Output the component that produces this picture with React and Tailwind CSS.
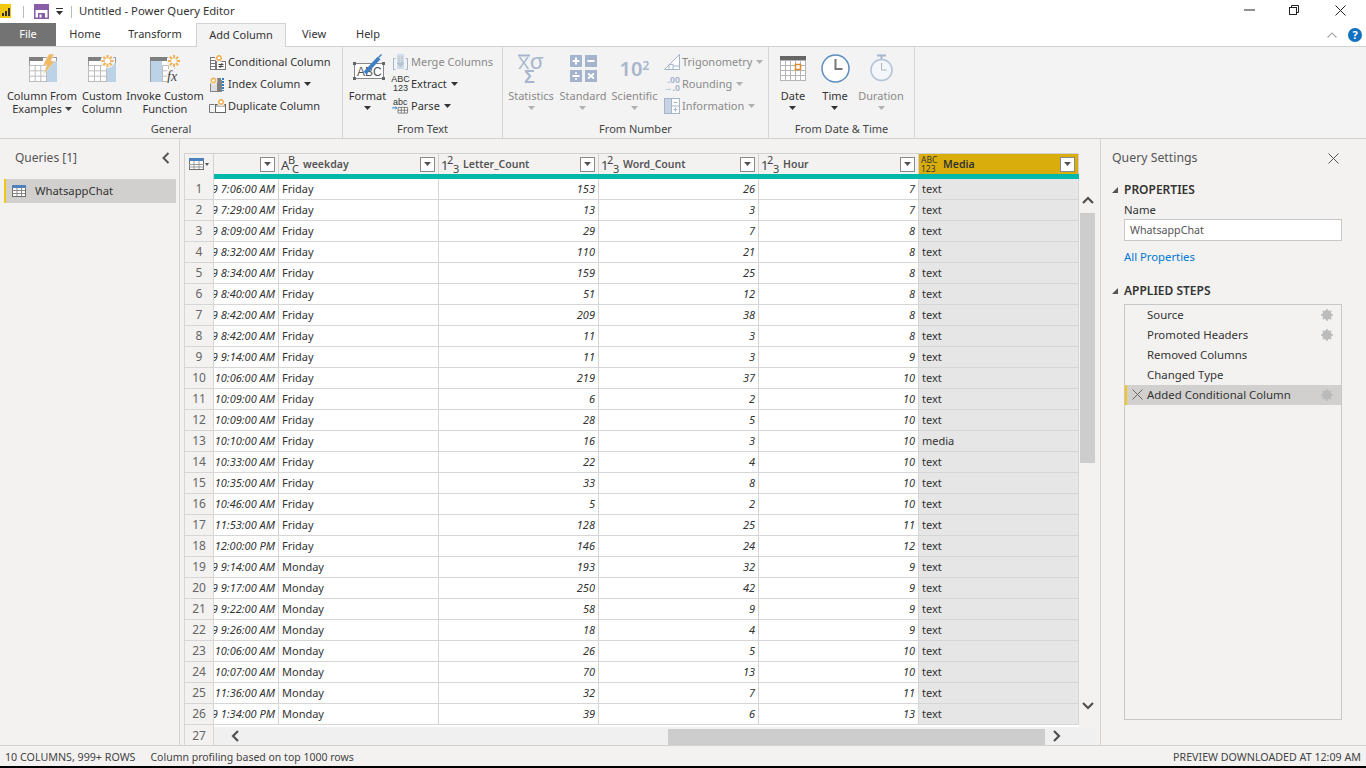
const FONT = { fontFamily: '"Noto Sans", "Open Sans", sans-serif' }

const rows = [
  ['7:06:00 AM', 'Friday', 153, 26, 7, 'text'],
  ['7:29:00 AM', 'Friday', 13, 3, 7, 'text'],
  ['8:09:00 AM', 'Friday', 29, 7, 8, 'text'],
  ['8:32:00 AM', 'Friday', 110, 21, 8, 'text'],
  ['8:34:00 AM', 'Friday', 159, 25, 8, 'text'],
  ['8:40:00 AM', 'Friday', 51, 12, 8, 'text'],
  ['8:42:00 AM', 'Friday', 209, 38, 8, 'text'],
  ['8:42:00 AM', 'Friday', 11, 3, 8, 'text'],
  ['9:14:00 AM', 'Friday', 11, 3, 9, 'text'],
  ['10:06:00 AM', 'Friday', 219, 37, 10, 'text'],
  ['10:09:00 AM', 'Friday', 6, 2, 10, 'text'],
  ['10:09:00 AM', 'Friday', 28, 5, 10, 'text'],
  ['10:10:00 AM', 'Friday', 16, 3, 10, 'media'],
  ['10:33:00 AM', 'Friday', 22, 4, 10, 'text'],
  ['10:35:00 AM', 'Friday', 33, 8, 10, 'text'],
  ['10:46:00 AM', 'Friday', 5, 2, 10, 'text'],
  ['11:53:00 AM', 'Friday', 128, 25, 11, 'text'],
  ['12:00:00 PM', 'Friday', 146, 24, 12, 'text'],
  ['9:14:00 AM', 'Monday', 193, 32, 9, 'text'],
  ['9:17:00 AM', 'Monday', 250, 42, 9, 'text'],
  ['9:22:00 AM', 'Monday', 58, 9, 9, 'text'],
  ['9:26:00 AM', 'Monday', 18, 4, 9, 'text'],
  ['10:06:00 AM', 'Monday', 26, 5, 10, 'text'],
  ['10:07:00 AM', 'Monday', 70, 13, 10, 'text'],
  ['11:36:00 AM', 'Monday', 32, 7, 11, 'text'],
  ['1:34:00 PM', 'Monday', 39, 6, 13, 'text'],
]

const steps = [
  { name: 'Source', gear: true },
  { name: 'Promoted Headers', gear: true },
  { name: 'Removed Columns' },
  { name: 'Changed Type' },
  { name: 'Added Conditional Column', gear: true, active: true },
]

function Caret({ color = '#444' }) {
  return <svg width="7" height="4" viewBox="0 0 7 4" className="inline-block"><path d="M0 0h7L3.500 4z" fill={color} /></svg>
}

function Grid({ x, y, w, h, cols, rows: r, stroke = '#8a8a8a' }) {
  const lines = []
  for (let i = 0; i <= cols; i++) lines.push(<path key={'c' + i} d={`M${x + (w * i) / cols} ${y}v${h}`} stroke={stroke} />)
  for (let i = 0; i <= r; i++) lines.push(<path key={'r' + i} d={`M${x} ${y + (h * i) / r}h${w}`} stroke={stroke} />)
  return <g strokeWidth="1" fill="none">{lines}</g>
}

function Spark({ cx, cy, r = 6 }) {
  return (
    <g stroke="#f0b45a" strokeWidth="2">
      <circle cx={cx} cy={cy} r={r + 1} fill="#f3f3f3" stroke="none" />
      <path d={`M${cx - r} ${cy}h${r * 2}M${cx} ${cy - r}v${r * 2}M${cx - r * 0.7} ${cy - r * 0.7}l${r * 1.4} ${r * 1.4}M${cx - r * 0.7} ${cy + r * 0.7}l${r * 1.4} ${-r * 1.4}`} />
      <circle cx={cx} cy={cy} r={r * 0.45} fill="#fff" stroke="none" />
    </g>
  )
}

function IconExamples() {
  return (
    <svg width="30" height="32" viewBox="0 0 30 32">
      <rect x="2.500" y="5.500" width="27" height="24" fill="#fff" stroke="#9a9a9a" />
      <rect x="2" y="5" width="14" height="4" fill="#7f7f7f" />
      <rect x="20" y="9" width="10" height="21" fill="#bcd2e6" />
      <Grid x={2.5} y={13.5} w={17} h={16} cols={3} rows={3} stroke="#bdbdbd" />
      <path d="M22 2h5l-3 7h4L16 23l4-10h-4z" fill="#f0b860" stroke="#f3f3f3" strokeWidth="0.500" />
    </svg>
  )
}

function IconCustom() {
  return (
    <svg width="30" height="28" viewBox="0 0 30 28">
      <rect x="1.500" y="3.500" width="27" height="24" fill="#fff" stroke="#9a9a9a" />
      <rect x="1" y="3" width="14" height="4" fill="#7f7f7f" />
      <rect x="20" y="9" width="9" height="19" fill="#bcd2e6" />
      <Grid x={1.5} y={11.5} w={18} h={16} cols={3} rows={3} stroke="#bdbdbd" />
      <Spark cx={20.5} cy={7} />
    </svg>
  )
}

function IconInvoke() {
  return (
    <svg width="32" height="30" viewBox="0 0 32 30">
      <rect x="1.500" y="4.500" width="24" height="24" fill="#fff" stroke="#9a9a9a" />
      <rect x="1" y="4" width="17" height="4" fill="#7f7f7f" />
      <rect x="2" y="8" width="11" height="21" fill="#bcd2e6" />
      <Grid x={13.5} y={12.5} w={12} h={16} cols={2} rows={3} stroke="#bdbdbd" />
      <Spark cx={25} cy={8} />
      <rect x="18" y="16" width="14" height="14" fill="#f3f3f3" />
      <text x="18" y="28" fontSize="14" fontStyle="italic" fontFamily='"Liberation Serif", serif' fill="#444">fx</text>
    </svg>
  )
}

function IconConditional() {
  return (
    <svg width="16" height="15" viewBox="0 0 16 15">
      <rect x="0.500" y="2.500" width="5" height="12" fill="#fff" stroke="#777" />
      <path d="M0 5.500h5M0 8.500h5M0 11.500h5" stroke="#777" />
      <rect x="6.500" y="6.500" width="9" height="8" fill="#fff" stroke="#777" />
      <path d="M8.500 9.500h5M8.500 11.500h5M12 8l-2 5" stroke="#444" />
      <Spark cx={9} cy={3} r={3} />
    </svg>
  )
}

function IconIndex() {
  return (
    <svg width="16" height="15" viewBox="0 0 16 15">
      <rect x="0.500" y="3.500" width="11" height="11" fill="#ddd" stroke="#888" />
      <rect x="7" y="1" width="4" height="14" fill="#7f7f7f" />
      <path d="M13 1v13" stroke="#2f7fc6" strokeDasharray="2 1" strokeWidth="2" />
      <Spark cx={3.500} cy={3.500} r={3} />
    </svg>
  )
}

function IconDuplicate() {
  return (
    <svg width="17" height="15" viewBox="0 0 17 15">
      <path d="M5.500 5.500h-5v8h5" fill="none" stroke="#777" />
      <rect x="6.500" y="5.500" width="10" height="8" fill="#fff" stroke="#666" />
      <rect x="7" y="6" width="9" height="2" fill="#bbb" />
      <Spark cx={12} cy={3} r={3} />
    </svg>
  )
}

function IconFormat() {
  return (
    <svg width="34" height="28" viewBox="0 0 34 28">
      <rect x="3.500" y="9.500" width="29" height="15" fill="#fff" stroke="#888" />
      <rect x="2" y="8" width="3" height="3" fill="#666" />
      <rect x="31" y="8" width="3" height="3" fill="#666" />
      <rect x="2" y="23" width="3" height="3" fill="#666" />
      <rect x="31" y="23" width="3" height="3" fill="#666" />
      <text x="6" y="22" fontSize="12" fontFamily='"Liberation Sans", sans-serif' fill="#555">ABC</text>
      <path d="M14 19 28 4" stroke="#3f7fc4" strokeWidth="4" />
      <path d="M27 3l3-3 1 1-3 3z" fill="#3f7fc4" />
    </svg>
  )
}

function IconMerge() {
  return (
    <svg width="17" height="18" viewBox="0 0 17 18">
      <path d="M3.500 5.500h-2v11h2M13.500 5.500h2v11h-2" fill="none" stroke="#9fb6d0" />
      <rect x="5" y="1" width="7" height="15" fill="#d4dce6" />
      <path d="M7 3v7M10 3v7M5 10l3.500 4L12 10z" fill="#b4c4d6" stroke="#b4c4d6" />
    </svg>
  )
}

function IconStack({ top, bottom }) {
  return (
    <div className="w-[17px] flex flex-col items-center leading-[9px] text-[9px] text-[#333]" style={{ fontFamily: '"Liberation Sans", sans-serif' }}>
      <span>{top}</span>
      <span>{bottom}</span>
    </div>
  )
}

function IconParse() {
  return (
    <svg width="18" height="18" viewBox="0 0 18 18">
      <text x="1" y="8" fontSize="9.500" fontFamily='"Liberation Sans", sans-serif' fill="#333">abc</text>
      <path d="M0 11h5l-1.500-1.500M5 11l-1.500 1.500" stroke="#2f7fc6" fill="none" />
      <rect x="7" y="10" width="10" height="7" fill="#fff" />
      <Grid x={6.5} y={10.5} w={10} h={6} cols={3} rows={2} stroke="#777" />
    </svg>
  )
}

function IconStatistics() {
  return (
    <svg width="28" height="30" viewBox="0 0 28 30">
      <path d="M1 2.500h12" stroke="#a7b6cc" strokeWidth="2" />
      <text x="1" y="16" fontSize="17" fontFamily='"Liberation Sans", sans-serif' fill="#a7b6cc">X</text>
      <text x="13" y="16" fontSize="22" fontFamily='"Liberation Sans", sans-serif' fill="#a7b6cc">&sigma;</text>
      <text x="7" y="30" fontSize="18" fontWeight="bold" fontFamily='"Liberation Sans", sans-serif' fill="#a7b6cc">&Sigma;</text>
    </svg>
  )
}

function IconStandard() {
  return (
    <svg width="27" height="27" viewBox="0 0 27 27">
      <rect width="12" height="12" fill="#a3b4cc" />
      <rect x="15" width="12" height="12" fill="#a3b4cc" />
      <rect y="15" width="12" height="12" fill="#a3b4cc" />
      <rect x="15" y="15" width="12" height="12" fill="#a3b4cc" />
      <path d="M2.500 6h7M6 2.500v7M17.500 6h7M2.500 21h7M18 18.500l6 5M24 18.500l-6 5" stroke="#fff" strokeWidth="2" />
      <circle cx="6" cy="18" r="1" fill="#fff" />
      <circle cx="6" cy="24" r="1" fill="#fff" />
    </svg>
  )
}

function IconTrig() {
  return (
    <svg width="16" height="16" viewBox="0 0 16 16">
      <path d="M15.500 0.500v15H0.500z" fill="#fff" stroke="#a3b4cc" />
      <path d="M5 15.500v-5h4v5M9 12h6" fill="none" stroke="#a3b4cc" />
    </svg>
  )
}

function IconRounding() {
  return (
    <div className="w-[17px] h-[16px] text-[#a3b4cc] text-[9px] leading-[8px] font-bold" style={{ fontFamily: '"Liberation Sans", sans-serif' }}>
      <span className="block text-right">.00</span>
      <span className="block text-right">&rarr;.0</span>
    </div>
  )
}

function IconInformation() {
  return (
    <svg width="16" height="16" viewBox="0 0 16 16">
      <rect x="0.500" y="0.500" width="15" height="15" fill="#fff" stroke="#a3b4cc" />
      <rect x="1" y="1" width="6" height="14" fill="#c7d3e3" />
      <path d="M8 8h7M7.500 1v14M9.500 4.500h4M9.500 11.500h4M11.500 9.500v4" stroke="#a3b4cc" fill="none" />
    </svg>
  )
}

function IconDate() {
  return (
    <svg width="26" height="25" viewBox="0 0 26 25">
      <rect x="0.500" y="0.500" width="25" height="24" fill="#fff" stroke="#888" />
      <rect width="26" height="4" fill="#666" />
      <Grid x={0.5} y={4.5} w={25} h={20} cols={5} rows={4} stroke="#b5b5b5" />
      <rect x="15.500" y="8.500" width="5" height="5" fill="#fff" stroke="#e08a2c" strokeWidth="1.500" />
    </svg>
  )
}

function IconClock() {
  return (
    <svg width="29" height="29" viewBox="0 0 29 29">
      <circle cx="14.500" cy="14.500" r="13.500" fill="#fff" stroke="#5b8dbe" strokeWidth="1.500" />
      <path d="M14.500 5v10h7" fill="none" stroke="#777" strokeWidth="2" />
    </svg>
  )
}

function IconDuration() {
  return (
    <svg width="23" height="28" viewBox="0 0 23 28">
      <path d="M7 1.500h9M11.500 1.500v4" stroke="#a7b6cc" strokeWidth="2" />
      <circle cx="11.500" cy="16" r="10.500" fill="#f3f6fa" stroke="#b3c2d6" strokeWidth="1.500" />
      <path d="M11.500 9v7h5" fill="none" stroke="#b3b3b3" />
    </svg>
  )
}

function LargeButton({ width, icon, lines, caret, stacked, disabled }) {
  return (
    <div className={`${width} flex flex-col items-center ${disabled ? 'text-[#8a8a8a]' : 'text-[#333]'}`}>
      <div className="h-[40px] mt-[1px] flex items-center justify-center">{icon}</div>
      <div className="text-center leading-[13px] text-[11px] whitespace-nowrap mt-[1px]">
        {lines.map((l, i) => (
          <div key={i} className="h-[13px] flex items-center justify-center">
            {l}
            {caret && i === lines.length - 1 && <span className="ml-[3px] flex items-center"><Caret /></span>}
          </div>
        ))}
        {stacked && <div className="h-[11px] flex items-center justify-center"><Caret color={disabled ? '#b0b0b0' : '#333'} /></div>}
      </div>
    </div>
  )
}

function SmallButton({ icon, label, caret, disabled, iconWidth = 'w-[17px]' }) {
  return (
    <div className={`h-[22px] flex items-center whitespace-nowrap text-[11px] ${disabled ? 'text-[#8a8a8a]' : 'text-[#333]'}`}>
      <div className={`${iconWidth} flex justify-center`}>{icon}</div>
      <span className="ml-[2px]">{label}</span>
      {caret && <span className="ml-[4px] flex items-center"><Caret color={disabled ? '#b0b0b0' : '#333'} /></span>}
    </div>
  )
}

function RibbonGroup({ width, label, children, className = '' }) {
  return (
    <div className={`${width} h-full border-r border-[#d6d6d6] flex flex-col`}>
      <div className={`flex-1 flex ${className}`}>{children}</div>
      <div className="h-[17px] text-center text-[11px] leading-[15px] text-[#444]">{label}</div>
    </div>
  )
}

function TitleBar() {
  return (
    <div className="h-[23px] bg-white flex items-center">
      <div className="w-[11px] h-[14px] bg-[#f2c811] flex items-end justify-center gap-[1px] pb-[2px] mb-[1px]">
        <span className="w-[2px] h-[3px] bg-[#333]" />
        <span className="w-[2px] h-[5px] bg-[#333]" />
        <span className="w-[2px] h-[8px] bg-[#333]" />
      </div>
      <div className="w-px h-[12px] bg-[#bbb] ml-[12px]" />
      <svg width="15" height="15" viewBox="0 0 15 15" className="ml-[10px] mb-[1px]">
        <path d="M0.750 0.750h13.500v13.500H0.750z" fill="#fff" stroke="#8a5da8" strokeWidth="1.500" />
        <rect x="1" y="1" width="13" height="5" fill="#8a5da8" />
        <rect x="4" y="9" width="7" height="5.500" fill="#8a5da8" />
        <rect x="5.500" y="10.500" width="2" height="3" fill="#fff" />
      </svg>
      <div className="ml-[7px] flex flex-col items-center gap-[2px]">
        <span className="w-[7px] h-px bg-[#333]" />
        <Caret color="#333" />
      </div>
      <div className="w-px h-[12px] bg-[#bbb] ml-[8px]" />
      <div className="ml-[7px] text-[11.300px] text-[#333]">Untitled - Power Query Editor</div>
      <div className="flex-1" />
      <svg width="11" height="2" viewBox="0 0 11 2" className="mr-[34px] mb-[3px]"><path d="M0 1h11" stroke="#222" /></svg>
      <svg width="10" height="10" viewBox="0 0 10 10" className="mr-[36px] mb-[3px]">
        <path d="M2.500 2.500v-2h7v7h-2" fill="none" stroke="#222" />
        <rect x="0.500" y="2.500" width="7" height="7" fill="#fff" stroke="#222" />
      </svg>
      <svg width="11" height="11" viewBox="0 0 11 11" className="mr-[20px] mb-[3px]"><path d="M0.500 0.500l10 10M10.500 0.500l-10 10" stroke="#222" /></svg>
    </div>
  )
}

function Tabs() {
  return (
    <div className="h-[24px] bg-white flex border-b border-[#d2d2d2] text-[11px] text-[#333] relative">
      <div className="w-[56px] h-[23px] bg-[#737373] text-white flex items-center justify-center">File</div>
      <div className="w-[58px] flex items-center justify-center">Home</div>
      <div className="w-[82px] flex items-center justify-center">Transform</div>
      <div className="w-[90px] h-[24px] bg-[#f3f3f3] border border-b-0 border-[#d2d2d2] flex items-center justify-center">Add Column</div>
      <div className="w-[56px] flex items-center justify-center">View</div>
      <div className="w-[52px] flex items-center justify-center">Help</div>
      <div className="flex-1" />
      <svg width="10" height="6" viewBox="0 0 10 6" className="self-center mr-[11px]"><path d="M0.500 5.500 5 1l4.500 4.500" fill="none" stroke="#aaa" strokeWidth="1.200" /></svg>
      <div className="w-[14px] h-[14px] mr-[4px] self-center rounded-full bg-[#1170c0] text-white text-[11px] font-bold flex items-center justify-center leading-none">?</div>
    </div>
  )
}

function Ribbon() {
  return (
    <div className="h-[92px] bg-[#f3f3f3] border-b border-[#d0d0d0] flex">
      <RibbonGroup width="w-[343px]" label="General" className="pl-[6px]">
        <LargeButton width="w-[72px]" icon={<IconExamples />} lines={['Column From', 'Examples']} caret />
        <LargeButton width="w-[48px]" icon={<IconCustom />} lines={['Custom', 'Column']} />
        <LargeButton width="w-[78px]" icon={<IconInvoke />} lines={['Invoke Custom', 'Function']} />
        <div className="ml-[5px] pt-[4px]">
          <SmallButton icon={<IconConditional />} label="Conditional Column" />
          <SmallButton icon={<IconIndex />} label="Index Column" caret />
          <SmallButton icon={<IconDuplicate />} label="Duplicate Column" />
        </div>
      </RibbonGroup>
      <RibbonGroup width="w-[160px]" label="From Text" className="pl-[4px]">
        <LargeButton width="w-[41px]" icon={<IconFormat />} lines={['Format']} stacked />
        <div className="ml-[4px] pt-[4px]">
          <SmallButton icon={<IconMerge />} label="Merge Columns" disabled />
          <SmallButton icon={<IconStack top="ABC" bottom="123" />} label="Extract" caret />
          <SmallButton icon={<IconParse />} label="Parse" caret />
        </div>
      </RibbonGroup>
      <RibbonGroup width="w-[266px]" label="From Number" className="pl-[3px]">
        <LargeButton width="w-[50px]" icon={<IconStatistics />} lines={['Statistics']} stacked disabled />
        <LargeButton width="w-[54px]" icon={<IconStandard />} lines={['Standard']} stacked disabled />
        <LargeButton width="w-[49px]" icon={<div className="text-[20px] text-[#a7b6cc] font-semibold leading-none mt-[2px]">10<sup className="text-[12px]">2</sup></div>} lines={['Scientific']} stacked disabled />
        <div className="ml-[4px] pt-[4px]">
          <SmallButton icon={<IconTrig />} label="Trigonometry" caret disabled />
          <SmallButton icon={<IconRounding />} label="Rounding" caret disabled />
          <SmallButton icon={<IconInformation />} label="Information" caret disabled />
        </div>
      </RibbonGroup>
      <RibbonGroup width="w-[146px]" label="From Date & Time">
        <LargeButton width="w-[48px]" icon={<IconDate />} lines={['Date']} stacked />
        <LargeButton width="w-[36px]" icon={<IconClock />} lines={['Time']} stacked />
        <LargeButton width="w-[56px]" icon={<IconDuration />} lines={['Duration']} stacked disabled />
      </RibbonGroup>
    </div>
  )
}

function QueriesPane() {
  return (
    <div className="w-[180px] border-r border-[#d2d2d2] pt-[9px] shrink-0">
      <div className="flex items-center justify-between pl-[15px] pr-[9px] h-[20px] text-[12px] text-[#555]">
        <span>Queries [1]</span>
        <svg width="8" height="12" viewBox="0 0 8 12"><path d="M6.500 1 1.500 6l5 5" fill="none" stroke="#555" strokeWidth="2" /></svg>
      </div>
      <div className="ml-[4px] mr-[3px] mt-[11px] h-[24px] bg-[#d2d0ce] border-l-2 border-[#f2c811] flex items-center text-[11.300px] text-[#333]">
        <svg width="14" height="12" viewBox="0 0 14 12" className="ml-[6px]">
          <rect x="0.500" y="0.500" width="13" height="11" fill="#fff" stroke="#6d6d6d" />
          <rect width="14" height="3" fill="#4f81bd" />
          <path d="M5 3v8M9.500 3v8M0 5.500h13M0 8.500h13" stroke="#888" />
        </svg>
        <span className="ml-[9px] pt-[1px]">WhatsappChat</span>
      </div>
    </div>
  )
}

function FilterButton() {
  return (
    <div className="w-[15px] h-[15px] bg-white border border-[#8a8a8a] flex items-center justify-center shrink-0 ml-auto mr-[3px]">
      <Caret color="#555" />
    </div>
  )
}

function TypeIcon({ type }) {
  if (type === 'text') {
    return (
      <span className="relative w-[20px] h-[16px] text-[13px] text-[#444] shrink-0 leading-none">
        <span className="absolute left-0 bottom-0">A</span>
        <span className="absolute left-[7px] top-[-2px] text-[11px]">B</span>
        <span className="absolute left-[11px] bottom-[-2px] text-[11px]">C</span>
      </span>
    )
  }
  if (type === 'any') {
    return (
      <span className="w-[20px] text-[8.500px] leading-[9px] text-[#333] shrink-0 flex flex-col items-start">
        <span>ABC</span>
        <span>123</span>
      </span>
    )
  }
  return (
    <span className="relative w-[20px] h-[16px] text-[13px] text-[#444] shrink-0 leading-none">
      <span className="absolute left-0 bottom-0">1</span>
      <span className="absolute left-[6px] top-[-2px] text-[11px]">2</span>
      <span className="absolute left-[12px] bottom-[-2px] text-[11px]">3</span>
    </span>
  )
}

function HeaderCell({ width, type, name, active }) {
  return (
    <div className={`${width} h-[20px] flex items-center pl-[2px] border-r border-[#d2d2d2] ${active ? 'bg-[#d9ae0c] text-[#333]' : 'text-[#555]'}`}>
      {type && <TypeIcon type={type} />}
      {name && <span className="ml-[2px] pt-[1px] text-[10.500px] font-semibold whitespace-nowrap">{name}</span>}
      <FilterButton />
    </div>
  )
}

function DataTable() {
  return (
    <div className="flex-1 min-w-0 flex flex-col">
      <div className="flex bg-[#f3f2f1] border-t border-l border-[#d2d2d2]">
        <div className="w-[29px] h-[20px] border-r border-[#d2d2d2] flex items-center justify-center gap-[1px]">
          <svg width="15" height="12" viewBox="0 0 15 12">
            <rect x="0.500" y="0.500" width="14" height="11" fill="#fff" stroke="#6d6d6d" />
            <rect width="15" height="3" fill="#4f81bd" />
            <path d="M5 3v8M10 3v8M0 6.500h15M0 9h15" stroke="#999" />
          </svg>
          <svg width="4" height="3" viewBox="0 0 4 3"><path d="M0 0h4L2 3z" fill="#555" /></svg>
        </div>
        <HeaderCell width="w-[65px]" />
        <HeaderCell width="w-[160px]" type="text" name="weekday" />
        <HeaderCell width="w-[160px]" type="num" name="Letter_Count" />
        <HeaderCell width="w-[160px]" type="num" name="Word_Count" />
        <HeaderCell width="w-[160px]" type="num" name="Hour" />
        <HeaderCell width="w-[160px]" type="any" name="Media" active />
      </div>
      <div className="flex h-[5px]">
        <div className="w-[30px] bg-[#f3f2f1] border-l border-r border-[#d2d2d2]" />
        <div className="w-[865px] bg-[#01b8aa]" />
      </div>
      <div className="flex-1 min-h-0 overflow-hidden">
        {rows.map((r, i) => (
          <div key={i} className="flex h-[21px] text-[11px] text-[#333] leading-[20px]">
            <div className="w-[30px] bg-[#f3f2f1] border-l border-r border-b border-[#d6d6d6] text-center text-[12px] text-[#666]">{i + 1}</div>
            <div className="w-[65px] bg-white border-r border-b border-[#d6d6d6] overflow-hidden flex justify-end pr-[3px] italic whitespace-nowrap">
              <span className="shrink-0">{r[0].length < 11 ? `9 ${r[0]}` : r[0]}</span>
            </div>
            <div className="w-[160px] bg-white border-r border-b border-[#d6d6d6] pl-[3px]">{r[1]}</div>
            <div className="w-[160px] bg-white border-r border-b border-[#d6d6d6] pr-[3px] text-right italic">{r[2]}</div>
            <div className="w-[160px] bg-white border-r border-b border-[#d6d6d6] pr-[3px] text-right italic">{r[3]}</div>
            <div className="w-[160px] bg-white border-r border-b border-[#d6d6d6] pr-[3px] text-right italic">{r[4]}</div>
            <div className="w-[160px] bg-[#e6e6e6] border-r border-b border-[#d6d6d6] pl-[3px]">{r[5]}</div>
          </div>
        ))}
        <div className="flex h-[20px]">
          <div className="w-[30px] bg-[#f3f2f1] border-l border-r border-[#d6d6d6] text-center text-[12px] leading-[21px] text-[#666]">27</div>
          <div className="flex-1 bg-white" />
        </div>
      </div>
    </div>
  )
}

function VerticalScrollbar() {
  return (
    <div className="w-[16px] ml-[1px] mr-[4px] shrink-0 mt-[26px] pb-[20px] flex flex-col">
      <div className="h-[34px] pt-[17px] flex items-start justify-center">
        <svg width="12" height="8" viewBox="0 0 12 8"><path d="M1 7l5-5 5 5" fill="none" stroke="#505050" strokeWidth="2.200" /></svg>
      </div>
      <div className="h-[250px] w-[15px] bg-[#cdcdcd]" />
      <div className="flex-1" />
      <div className="h-[38px] flex items-center justify-center">
        <svg width="12" height="8" viewBox="0 0 12 8"><path d="M1 1l5 5 5-5" fill="none" stroke="#505050" strokeWidth="2.200" /></svg>
      </div>
    </div>
  )
}

function HorizontalScrollbar() {
  return (
    <div className="h-[18px] ml-[30px] mr-[4px] bg-[#f0f0f0] flex items-center">
      <svg width="8" height="12" viewBox="0 0 8 12" className="ml-[17px]"><path d="M7 1 2 6l5 5" fill="none" stroke="#505050" strokeWidth="2.200" /></svg>
      <div className="w-[377px] h-[16px] mt-[2px] bg-[#cdcdcd] ml-[429px]" />
      <svg width="8" height="12" viewBox="0 0 8 12" className="ml-[8px]"><path d="M1 1l5 5-5 5" fill="none" stroke="#505050" strokeWidth="2.200" /></svg>
    </div>
  )
}

function CenterPane() {
  return (
    <div className="flex-1 min-w-0 flex flex-col pt-[14px] pl-[4px]">
      <div className="flex-1 min-h-0 flex">
        <DataTable />
        <VerticalScrollbar />
      </div>
      <div className="relative z-10 -mt-[18px]">
        <HorizontalScrollbar />
      </div>
    </div>
  )
}

function SettingsPane() {
  return (
    <div className="w-[266px] shrink-0 border-l border-[#d2d2d2] pt-[9px] pl-[11px] pr-[24px] flex flex-col">
      <div className="h-[20px] flex items-center justify-between text-[12.300px] text-[#555] pr-[3px]">
        <span>Query Settings</span>
        <svg width="11" height="11" viewBox="0 0 11 11"><path d="M0.500 0.500l10 10M10.500 0.500l-10 10" stroke="#555" /></svg>
      </div>
      <div className="mt-[14px] flex items-center h-[16px] text-[12px] font-semibold text-[#333]">
        <svg width="6" height="6" viewBox="0 0 6 6"><path d="M6 0v6H0z" fill="#555" /></svg>
        <span className="ml-[6px]">PROPERTIES</span>
      </div>
      <div className="pl-[12px] mt-[4px] h-[16px] text-[11.300px] leading-[16px] text-[#333]">Name</div>
      <div className="ml-[12px] mt-[1px] h-[22px] w-[218px] bg-white border border-[#c8c8c8] text-[10.700px] text-[#555] leading-[20px] pl-[5px]">WhatsappChat</div>
      <div className="pl-[12px] mt-[8px] h-[16px] text-[11.300px] leading-[16px] text-[#0078d4]">All Properties</div>
      <div className="mt-[18px] flex items-center h-[16px] text-[12px] font-semibold text-[#333]">
        <svg width="6" height="6" viewBox="0 0 6 6"><path d="M6 0v6H0z" fill="#555" /></svg>
        <span className="ml-[6px]">APPLIED STEPS</span>
      </div>
      <div className="ml-[12px] mt-[5px] h-[416px] w-[218px] border border-[#c8c8c8]">
        {steps.map((s) => (
          <div key={s.name} className={`h-[20px] flex items-center text-[11.400px] text-[#333] relative ${s.active ? 'bg-[#d2d0ce]' : ''}`}>
            {s.active && (
              <>
                <span className="absolute left-0 top-0 bottom-0 w-[2px] bg-[#f2c811]" />
                <svg width="11" height="11" viewBox="0 0 11 11" className="absolute left-[7px] top-[4px]"><path d="M0.500 0.500l10 10M10.500 0.500l-10 10" stroke="#666" /></svg>
              </>
            )}
            <span className="ml-[22px]">{s.name}</span>
            {s.gear && (
              <svg width="12" height="12" viewBox="0 0 12 12" className="ml-auto mr-[8px]">
                <circle cx="6" cy="6" r="3.500" fill="none" stroke="#bbb" strokeWidth="2.500" />
                <path d="M6 0v12M0 6h12M1.800 1.800l8.400 8.400M10.200 1.800l-8.400 8.400" stroke="#bbb" strokeWidth="1.500" />
              </svg>
            )}
          </div>
        ))}
      </div>
    </div>
  )
}

function StatusBar() {
  return (
    <div className="h-[23px] border-t border-[#d2d2d2] bg-[#f3f2f1] flex items-center text-[10.700px] text-[#444] border-b-2 border-b-black px-[5px] pt-[3px]">
      <span>10 COLUMNS, 999+ ROWS</span>
      <span className="ml-[15px] text-[10.500px]">Column profiling based on top 1000 rows</span>
      <span className="ml-auto">PREVIEW DOWNLOADED AT 12:09 AM</span>
    </div>
  )
}

export default function App() {
  return (
    <div className="w-[1366px] h-[768px] flex flex-col overflow-hidden bg-[#f3f2f1]" style={FONT}>
      <TitleBar />
      <Tabs />
      <Ribbon />
      <div className="flex-1 min-h-0 flex">
        <QueriesPane />
        <CenterPane />
        <SettingsPane />
      </div>
      <StatusBar />
    </div>
  )
}
